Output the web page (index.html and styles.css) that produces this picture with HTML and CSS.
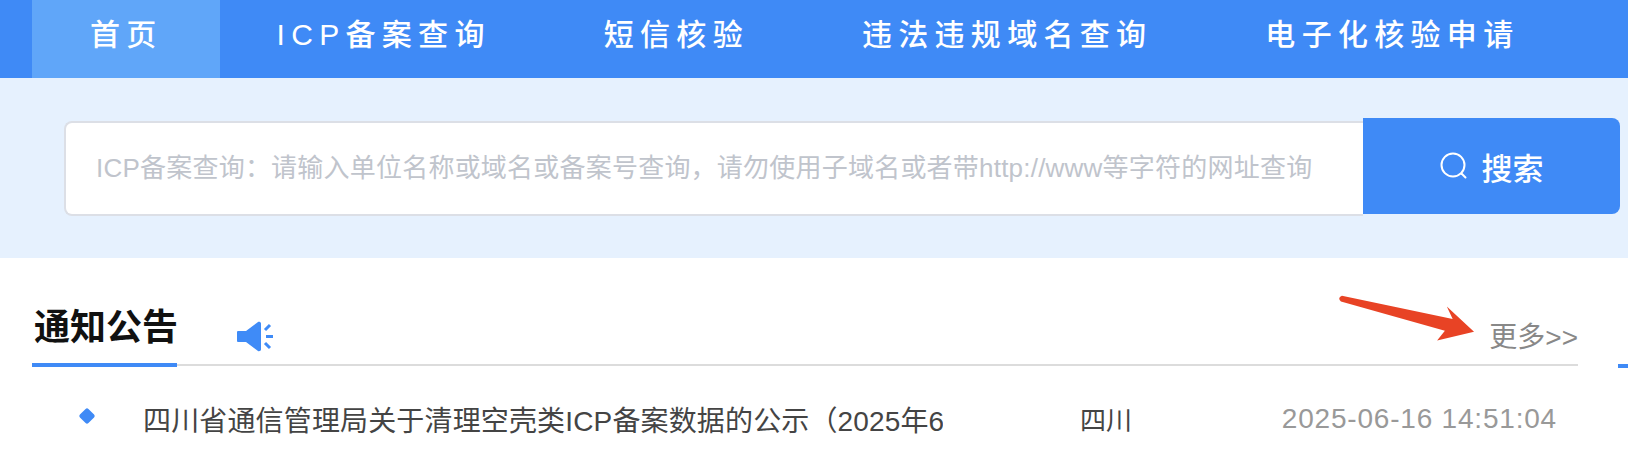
FILE: index.html

```html
<!DOCTYPE html>
<html lang="zh-CN">
<head>
    <meta charset="UTF-8">
    <meta name="viewport" content="width=device-width, initial-scale=1.0">
    <title>ICP备案查询</title>
    <link rel="stylesheet" href="styles.css">
</head>
<body>
    <nav class="nav">
        <a class="nav-item active">首页</a>
        <a class="nav-item">ICP备案查询</a>
        <a class="nav-item">短信核验</a>
        <a class="nav-item">违法违规域名查询</a>
        <a class="nav-item">电子化核验申请</a>
    </nav>
    <section class="search">
        <input class="search-input" type="text" placeholder="ICP备案查询：请输入单位名称或域名或备案号查询，请勿使用子域名或者带http://www等字符的网址查询">
        <button class="search-btn">
            <svg class="search-icon" viewBox="0 0 28 28" fill="none" stroke="#fff" stroke-width="2">
                <circle cx="13" cy="13" r="11.5"/>
                <path d="M21.5 21.5l4 4" stroke-linecap="round"/>
            </svg>
            搜索
        </button>
    </section>
    <section class="notice">
        <div class="notice-head">
            <h2 class="notice-title">通知公告</h2>
            <svg class="speaker" viewBox="0 0 36 33">
                <path d="M1 11h8L21 2c1-.6 3 0 3 1.500v26c0 1.500-2 2.100-3 1.500L9 22H1q-1 0-1-1V12q0-1 1-1z" fill="#3f8bf7"/>
                <path d="M28 10l5-5M29 16.500h7M28 23l5 5" stroke="#3f8bf7" stroke-width="3" fill="none"/>
            </svg>
            <a class="more">更多&gt;&gt;</a>
            <svg class="arrow" viewBox="0 0 140 52">
                <path d="M3 0L117 24L111 11L139 37L101 46L109 36L2 6Q-2 2 3 0z" fill="#e84325"/>
            </svg>
        </div>
        <span class="head-tail"></span>
        <div class="notice-row">
            <span class="dot"></span>
            <span class="row-title">四川省通信管理局关于清理空壳类ICP备案数据的公示（2025年6</span>
            <span class="row-area">四川</span>
            <span class="row-date">2025-06-16 14:51:04</span>
        </div>
    </section>
</body>
</html>
```

FILE: styles.css

```css
* {
    box-sizing: border-box;
}
html, body {
    height: 452px;
    overflow: hidden;
}
body {
    margin: 0;
    font-family: "Liberation Sans", "Noto Sans CJK SC", sans-serif;
    background: #fff;
    color: #333;
}
.nav {
    display: flex;
    height: 78px;
    padding-left: 32px;
    background: #3f8af6;
}
.nav-item {
    display: flex;
    align-items: center;
    padding: 0 56px 14px 57px;
    font-size: 30px;
    font-weight: 500;
    letter-spacing: 6.3px;
    color: #fff;
    white-space: nowrap;
}
.nav-item.active {
    padding-left: 58px;
    padding-right: 57px;
    background: #60a6f9;
}
.search {
    display: flex;
    align-items: center;
    height: 180px;
    padding: 0 8px 0 64px;
    background: #e6f1fe;
}
.search-input {
    width: 1299px;
    height: 95px;
    padding: 0 30px;
    border: 2px solid #dcdfe6;
    border-right: none;
    border-radius: 8px 0 0 8px;
    background: #fff;
    font-family: inherit;
    font-size: 26px;
    letter-spacing: .22px;
    outline: none;
}
.search-input::placeholder {
    color: #c0c4cc;
}
.search-btn {
    display: flex;
    align-items: center;
    justify-content: center;
    gap: 14px;
    width: 257px;
    height: 96px;
    margin-top: -4px;
    border: none;
    border-radius: 0 8px 8px 0;
    background: #3f8af6;
    color: #fff;
    font-family: inherit;
    font-size: 31px;
    font-weight: 500;
}
.search-icon {
    width: 28px;
    height: 28px;
}
.notice {
    position: relative;
    padding: 0 50px 0 32px;
}
.notice-head {
    position: relative;
    display: flex;
    align-items: center;
    height: 108px;
    border-bottom: 2px solid #dcdcdc;
}
.notice-title {
    display: flex;
    align-items: center;
    width: 145px;
    height: 108px;
    margin: 0 0 -4px;
    padding: 25px 0 0 2px;
    border-bottom: 4px solid #3f8af6;
    font-size: 36px;
    font-weight: 700;
    white-space: nowrap;
    color: #111;
}
.speaker {
    width: 36px;
    height: 33px;
    margin: 50px 0 0 60px;
}
.more {
    margin: 48px 0 0 auto;
    font-size: 28px;
    color: #888;
}
.arrow {
    position: absolute;
    top: 37px;
    right: 103px;
    width: 136px;
    height: 52px;
}
.head-tail {
    position: absolute;
    top: 106px;
    right: 0;
    width: 10px;
    height: 4px;
    background: #3f8af6;
}
.notice-row {
    display: flex;
    align-items: center;
    height: 85px;
    padding-top: 20px;
    font-size: 26px;
}
.dot {
    width: 12px;
    height: 12px;
    margin: -6px 0 0 49px;
    border-radius: 2px;
    background: #3f8af6;
    transform: rotate(45deg);
}
.row-title {
    width: 800px;
    margin-left: 50px;
    overflow: hidden;
    font-size: 28px;
    letter-spacing: .15px;
    white-space: nowrap;
    color: #444;
}
.row-area {
    margin-left: 137px;
    color: #444;
}
.row-date {
    margin-left: auto;
    padding-right: 21px;
    font-size: 28px;
    letter-spacing: .8px;
    color: #999;
}
```
